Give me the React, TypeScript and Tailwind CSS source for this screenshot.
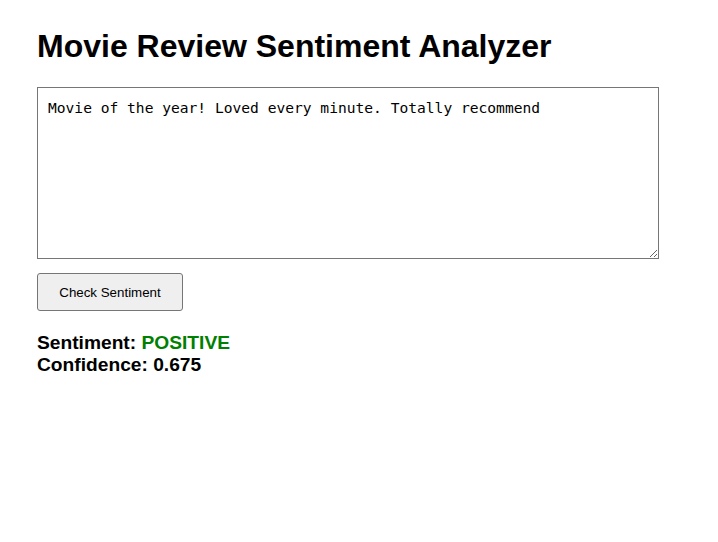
import { useState } from "react";

export default function App() {
  const [text, setText] = useState("Movie of the year! Loved every minute. Totally recommend");

  return (
    <div className="min-h-screen bg-white px-[37px] pt-[28px] font-['Liberation_Sans',Arial,sans-serif] text-black">
      <h1 className="text-[32px] font-bold leading-[37px]">Movie Review Sentiment Analyzer</h1>

      <textarea
        value={text}
        onChange={(e) => setText(e.target.value)}
        className="mt-[22px] block h-[172px] w-[622px] resize border border-[#767676] px-[10px] pt-[11px] pb-[10px] font-['DejaVu_Sans_Mono',monospace] text-[14.6px] leading-[18px] outline-none"
      />

      <button className="mt-[14px] h-[38px] w-[146px] rounded-[3px] border border-[#767676] bg-[#efefef] pt-[2px] text-[13.33px] text-black">
        Check Sentiment
      </button>

      <div className="mt-[21px] text-[19.2px] font-bold leading-[22px]">
        <div>
          Sentiment: <span className="text-[#008000]">POSITIVE</span>
        </div>
        <div>Confidence: 0.675</div>
      </div>
    </div>
  );
}
